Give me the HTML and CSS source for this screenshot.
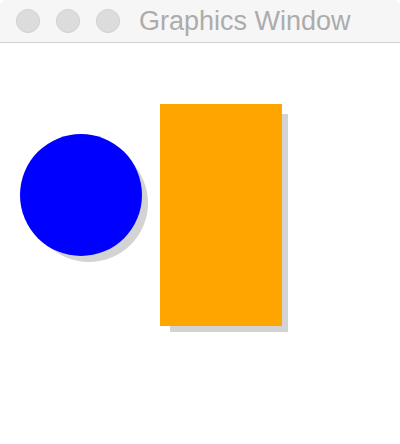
FILE: index.html
```html
<!DOCTYPE html>
<html>
<head>
<meta charset="utf-8">
<link rel="stylesheet" href="styles.css">
</head>
<body>
<div class="window">
  <div class="titlebar">
    <span class="light"></span>
    <span class="light"></span>
    <span class="light"></span>
    <span class="title">Graphics Window</span>
  </div>
  <svg class="canvas" width="400" height="401" viewBox="0 0 400 401">
    <circle cx="89" cy="160" r="59" fill="#d3d3d3"/>
    <circle cx="81" cy="152" r="61" fill="#0000ff"/>
    <rect x="170" y="71" width="118" height="218" fill="#d3d3d3"/>
    <rect x="160" y="61" width="122" height="222" fill="#ffa500"/>
  </svg>
</div>
</body>
</html>
```
FILE: styles.css
```css
html, body {
  margin: 0;
  padding: 0;
  background: #ffffff;
}
.window {
  width: 400px;
  height: 444px;
  overflow: hidden;
}
.titlebar {
  height: 42px;
  border-bottom: 1px solid #d1d1d1;
  background: #f6f6f6;
  border-radius: 6px 6px 0 0;
  display: flex;
  align-items: center;
  padding-left: 16px;
  gap: 16px;
  box-sizing: content-box;
}
.light {
  width: 22px;
  height: 22px;
  border-radius: 50%;
  background: #dcdcdc;
  border: 1px solid #d0d0d0;
  flex: none;
}
.title {
  margin-left: 3px;
  font-family: "Liberation Sans", Arial, sans-serif;
  font-size: 27px;
  line-height: 30px;
  color: #acacac;
  white-space: nowrap;
}
.canvas {
  display: block;
}
```
